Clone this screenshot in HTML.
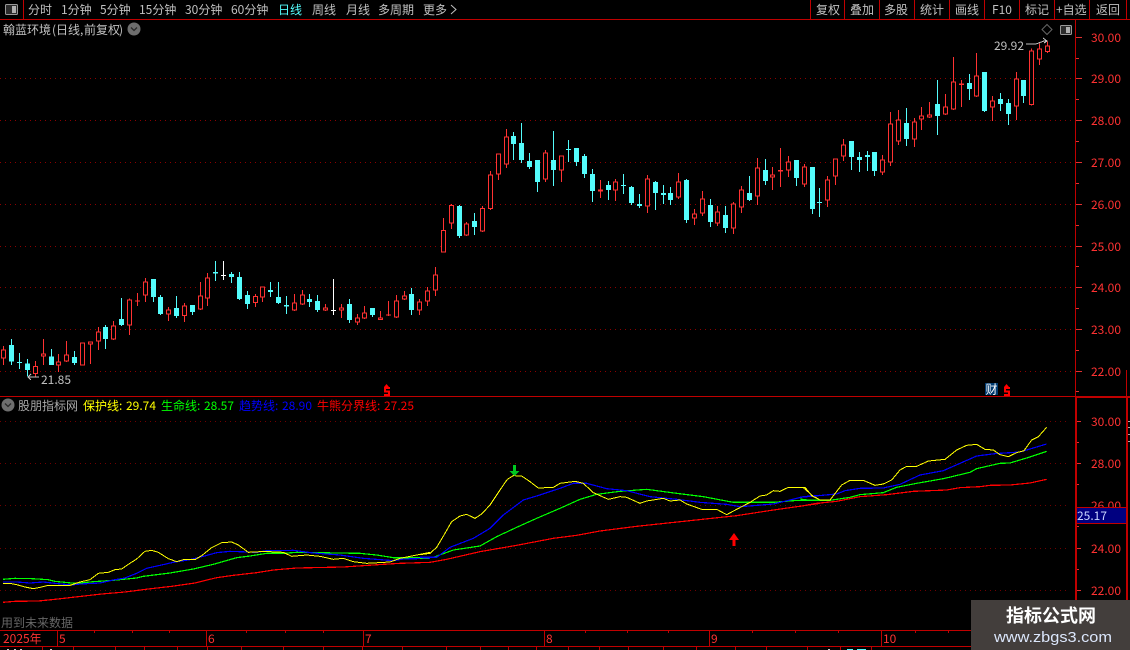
<!DOCTYPE html>
<html><head><meta charset="utf-8"><title>K</title>
<style>
html,body{margin:0;padding:0;background:#000;width:1130px;height:650px;overflow:hidden}
svg{display:block;position:absolute;left:0;top:0}
text{font-family:"WenQuanYi Zen Hei","Noto Sans CJK SC","Liberation Sans",sans-serif;font-size:12px;fill:#c0c0c0}
.n{fill:#ff3232}
.w{fill:none;stroke:#ff3232;stroke-width:3}
.c{fill:none;stroke:#54fcfc;stroke-width:3}
.v{fill:none;stroke:#fff;stroke-width:3}
.h{fill:#000;stroke:#ff3232;stroke-width:3}
.f{fill:#54fcfc}.r{fill:#ff3232}.x{fill:#fff}
.l{fill:none;stroke-width:3.6}
</style></head><body>
<svg width="1130" height="650" viewBox="0 0 1130 650" shape-rendering="crispEdges">
<rect width="1130" height="650" fill="#000"/>

<!-- grid -->
<path d="M0 78.5H1073M0 120.5H1073M0 162.5H1073M0 204.5H1073M0 246.5H1073M0 287.5H1073M0 329.5H1073M0 371.5H1073" stroke="#8c0000" stroke-dasharray="1 4" fill="none"/>
<path d="M0 421.5H1070M0 463.5H1070M0 505.5H1070M0 548.5H1070M0 590.5H1070" stroke="#700000" stroke-dasharray="1 4" fill="none"/>

<!-- frame -->
<g fill="#c00000">
<rect x="0" y="19" width="1130" height="1"/>
<rect x="23" y="0" width="1" height="19"/>
<rect x="810" y="0" width="1" height="19"/><rect x="844" y="0" width="1" height="19"/><rect x="879" y="0" width="1" height="19"/><rect x="914" y="0" width="1" height="19"/><rect x="949" y="0" width="1" height="19"/><rect x="984" y="0" width="1" height="19"/><rect x="1019" y="0" width="1" height="19"/><rect x="1054" y="0" width="1" height="19"/><rect x="1089" y="0" width="1" height="19"/><rect x="1126" y="0" width="1" height="19"/>
<rect x="1075" y="20" width="1" height="376"/>
<rect x="1126" y="370" width="1" height="26"/>
<rect x="0" y="396" width="1075" height="1"/>
<rect x="1075" y="396" width="55" height="2"/>
<rect x="1075" y="396" width="2" height="234"/>
<rect x="1126" y="396" width="2" height="234"/>
<rect x="0" y="630" width="1130" height="1"/>
<rect x="0" y="646" width="1130" height="1"/>
<rect x="57" y="630" width="1" height="16"/><rect x="206" y="630" width="1" height="16"/><rect x="363" y="630" width="1" height="16"/><rect x="544" y="630" width="1" height="16"/><rect x="709" y="630" width="1" height="16"/><rect x="881" y="630" width="1" height="16"/>
<path d="M94 631h1v2h-1zM132 631h1v2h-1zM169 631h1v2h-1zM246 631h1v2h-1zM285 631h1v2h-1zM323 631h1v2h-1zM585 631h1v2h-1zM627 631h1v2h-1zM668 631h1v2h-1zM752 631h1v2h-1zM795 631h1v2h-1zM838 631h1v2h-1zM915 631h1v2h-1zM948 631h1v2h-1z"/>
<path d="M42 647h1v3h-1zM73 647h1v3h-1zM115 647h1v3h-1zM144 647h1v3h-1zM177 647h1v3h-1zM207 647h1v3h-1zM241 647h1v3h-1zM283 647h1v3h-1zM323 647h1v3h-1zM362 647h1v3h-1zM402 647h1v3h-1zM446 647h1v3h-1zM480 647h1v3h-1zM508 647h1v3h-1zM536 647h1v3h-1zM568 647h1v3h-1zM599 647h1v3h-1zM628 647h1v3h-1zM663 647h1v3h-1zM696 647h1v3h-1zM735 647h1v3h-1zM766 647h1v3h-1zM807 647h1v3h-1zM840 647h1v3h-1zM871 647h1v3h-1z"/>
</g>
<g fill="#e03030">
<path d="M1076 37h6v1h-6zM1076 58h3v1h-3zM1076 78h6v1h-6zM1076 99h3v1h-3zM1076 120h6v1h-6zM1076 141h3v1h-3zM1076 162h6v1h-6zM1076 183h3v1h-3zM1076 204h6v1h-6zM1076 225h3v1h-3zM1076 246h6v1h-6zM1076 266h3v1h-3zM1076 287h6v1h-6zM1076 308h3v1h-3zM1076 329h6v1h-6zM1076 350h3v1h-3zM1076 371h6v1h-6zM1076 391h3v1h-3z"/>
<path d="M1077 421h4v1h-4zM1077 442h2v1h-2zM1077 463h4v1h-4zM1077 484h2v1h-2zM1077 526h2v1h-2zM1077 548h4v1h-4zM1077 569h2v1h-2zM1077 590h4v1h-4z"/>
</g>
<path d="M1128 421h2v1h-2zM1128 427h2v1h-2zM1128 434h2v1h-2zM1128 441h2v1h-2z" fill="#aaa"/>

<!-- candles A -->
<g transform="matrix(.33333 0 0 .33333 0 240)">
<path class="w" d="M10.5 318V375M106.5 363V412M130.5 297V375M175.5 342V396M199.5 303V366M247.5 307V377M271.5 304V372M295.5 261V330M340.5 243V300M388.5 175V285M412.5 159V198M436.5 114V186M505.5 201V243M553.5 189V246M601.5 126V210M622.5 99V198M766.5 162V201M787.5 139V186"/>
<path class="c" d="M34.5 297V375M58.5 339V387M82.5 357V410M154.5 327V375M223.5 333V375M316.5 255V327M364.5 174V258M460.5 117V186M481.5 165V225M529.5 168V234M577.5 195V225M646.5 63V123M694.5 96V129M718.5 96V180M742.5 153V207M811.5 126V171M835.5 126V192"/>
<path class="v" d="M670.5 63V120"/>
<path class="h" d="M4.5 329.5h12V354.5h-12zM100.5 379.5h12V400.5h-12zM124.5 341.5h12V348.5h-12zM169.5 365.5h12V374.5h-12zM193.5 344.5h12V363.5h-12zM241.5 308.5h12V375.5h-12zM265.5 305.5h12V312.5h-12zM289.5 275.5h12V302.5h-12zM334.5 257.5h12V297.5h-12zM382.5 179.5h12V255.5h-12zM430.5 125.5h12V165.5h-12zM499.5 209.5h12V222.5h-12zM547.5 197.5h12V226.5h-12zM595.5 167.5h12V207.5h-12zM616.5 113.5h12V174.5h-12zM760.5 169.5h12V187.5h-12zM781.5 140.5h12V170.5h-12z"/>
<path class="r" d="M405 181h15v3h-15z"/>
<path class="x" d="M663 105h15v3h-15z"/>
<path class="f" d="M27 315h15V365h-15zM51 366h15V369h-15zM75 370h15V390h-15zM147 349h15V375h-15zM216 351h15V369h-15zM309 261h15V297h-15zM357 237h15V255h-15zM453 117h15V171h-15zM474 171h15V222h-15zM522 204h15V228h-15zM570 195h15V216h-15zM639 96h15V101h-15zM687 102h15V111h-15zM711 111h15V177h-15zM735 165h15V192h-15zM804 150h15V156h-15zM828 171h15V189h-15z"/>
</g>
<!-- candles B -->
<g transform="matrix(.33333 0 0 .33333 280 240)">
<path class="w" d="M43.5 162V213M67.5 150V195M136.5 192V213M184.5 192V234M232.5 222V255M253.5 198V237M301.5 213V240M325.5 183V228M349.5 165V234M373.5 153V180M418.5 177V225M442.5 141V198M466.5 81V168"/>
<path class="c" d="M19.5 168V222M88.5 162V201M112.5 165V216M208.5 177V249M277.5 204V231M394.5 144V225"/>
<path class="v" d="M160.5 117V225"/>
<path class="h" d="M37.5 188.5h12V210.5h-12zM61.5 164.5h12V192.5h-12zM130.5 203.5h12V210.5h-12zM178.5 203.5h12V210.5h-12zM226.5 233.5h12V246.5h-12zM247.5 218.5h12V234.5h-12zM295.5 233.5h12V238.5h-12zM343.5 182.5h12V231.5h-12zM367.5 167.5h12V177.5h-12zM412.5 185.5h12V210.5h-12zM436.5 152.5h12V183.5h-12zM460.5 104.5h12V150.5h-12z"/>
<path class="r" d="M318 223h15v4h-15z"/>
<path class="x" d="M153 210h15v3h-15z"/>
<path class="f" d="M12 195h15V200h-15zM81 177h15V186h-15zM105 183h15V210h-15zM201 192h15V240h-15zM270 204h15V225h-15zM387 162h15V210h-15z"/>
</g>
<!-- candles C -->
<g transform="matrix(.33333 0 0 .33333 430 110)">
<path class="w" d="M40.5 324V428M64.5 282V357M109.5 336V378M157.5 288V366M181.5 183V300M205.5 130V210M229.5 57V174M346.5 120V216M394.5 136V216M511.5 210V264M556.5 207V273M652.5 195V309M745.5 189V267M793.5 297V345M817.5 243V318"/>
<path class="c" d="M88.5 285V384M133.5 309V375M250.5 66V150M274.5 39V159M298.5 129V177M322.5 150V246M370.5 63V228M415.5 90V156M439.5 114V168M463.5 132V204M487.5 177V276M535.5 213V270M580.5 192V252M604.5 228V285M628.5 252V294M676.5 213V300M700.5 225V282M721.5 231V285M769.5 207V339"/>
<path class="h" d="M34.5 361.5h12V426.5h-12zM58.5 286.5h12V339.5h-12zM103.5 341.5h12V375.5h-12zM151.5 295.5h12V363.5h-12zM175.5 194.5h12V295.5h-12zM199.5 131.5h12V192.5h-12zM223.5 80.5h12V162.5h-12zM340.5 128.5h12V207.5h-12zM388.5 137.5h12V180.5h-12zM505.5 239.5h12V243.5h-12zM550.5 215.5h12V240.5h-12zM646.5 206.5h12V288.5h-12zM739.5 215.5h12V261.5h-12zM787.5 311.5h12V324.5h-12zM811.5 266.5h12V309.5h-12z"/>
<path class="f" d="M81 288h15V378h-15zM126 333h15V351h-15zM243 78h15V102h-15zM267 99h15V150h-15zM291 153h15V171h-15zM315 150h15V216h-15zM363 150h15V180h-15zM408 117h15V120h-15zM432 114h15V156h-15zM456 138h15V192h-15zM480 192h15V243h-15zM528 225h15V240h-15zM573 225h15V228h-15zM597 231h15V279h-15zM621 282h15V288h-15zM669 216h15V249h-15zM693 249h15V255h-15zM714 249h15V270h-15zM762 210h15V330h-15z"/>
</g>
<!-- candles D -->
<g transform="matrix(.33333 0 0 .33333 700 100)">
<path class="w" d="M52.5 318V378M100.5 306V402M124.5 258V339M172.5 174V315M217.5 201V270M241.5 144V261M265.5 168V231M313.5 192V261M382.5 228V321M406.5 175V255M430.5 117V183M547.5 165V225M571.5 36V198M595.5 30V135M643.5 54V141M664.5 21V90M688.5 6V54"/>
<path class="c" d="M31.5 297V381M76.5 318V399M148.5 228V303M196.5 177V255M289.5 180V258M337.5 201V342M358.5 264V351M454.5 123V210M478.5 156V216M502.5 153V213M523.5 156V228M619.5 24V138"/>
<path class="h" d="M46.5 335.5h12V369.5h-12zM94.5 311.5h12V384.5h-12zM118.5 269.5h12V321.5h-12zM166.5 203.5h12V288.5h-12zM211.5 224.5h12V231.5h-12zM259.5 185.5h12V210.5h-12zM307.5 200.5h12V252.5h-12zM376.5 239.5h12V300.5h-12zM400.5 176.5h12V228.5h-12zM424.5 134.5h12V168.5h-12zM541.5 179.5h12V216.5h-12zM565.5 71.5h12V186.5h-12zM589.5 59.5h12V122.5h-12zM637.5 65.5h12V117.5h-12zM658.5 47.5h12V57.5h-12zM682.5 44.5h12V51.5h-12z"/>
<path class="r" d="M234 210h15v5h-15z"/>
<path class="f" d="M24 315h15V366h-15zM69 345h15V384h-15zM141 279h15V300h-15zM189 210h15V243h-15zM282 180h15V234h-15zM330 201h15V327h-15zM351 306h15V309h-15zM447 123h15V171h-15zM471 171h15V180h-15zM495 165h15V171h-15zM516 156h15V213h-15zM612 69h15V117h-15z"/>
</g>
<!-- candles E -->
<g transform="matrix(.33333 0 0 .33333 800 0)">
<path class="w" d="M436.5 282V345M460.5 171V330M484.5 240V321M529.5 159V291M577.5 288V363M649.5 216V360M694.5 146V316M718.5 130V195M742.5 124V159"/>
<path class="c" d="M412.5 240V405M508.5 222V300M553.5 216V336M601.5 279V333M625.5 297V375M670.5 240V309"/>
<path class="h" d="M430.5 320.5h12V342.5h-12zM454.5 245.5h12V327.5h-12zM523.5 227.5h12V288.5h-12zM571.5 302.5h12V321.5h-12zM643.5 236.5h12V318.5h-12zM688.5 152.5h12V313.5h-12zM712.5 146.5h12V176.5h-12zM736.5 137.5h12V154.5h-12z"/>
<path class="r" d="M477 250h15v5h-15z"/>
<path class="f" d="M405 312h15V348h-15zM501 249h15V267h-15zM546 216h15V333h-15zM594 297h15V312h-15zM618 309h15V342h-15zM663 240h15V288h-15z"/>
</g>

<!-- lower lines -->
<g transform="matrix(.33333 0 0 .33333 0 395)">
<polyline class="l" stroke="#f00" points="9,622 45,619 115,618 165,613 235,605 305,597 375,591 445,582 515,574 585,564 650,548 700,541 770,533 820,525 890,519 1030,516 1150,508 1200,505 1290,502"/>
<polyline class="l" stroke="#0f0" points="9,553 45,550 95,551 145,554 165,559 215,564 240,564 280,560 340,556 410,549 430,544 510,534 580,522 640,508 710,488 750,483 800,475 850,475 890,472 1080,475 1130,480 1180,488 1290,488"/>
<polyline class="l" stroke="#00f" points="9,561 50,561 90,564 130,561 165,565 215,570 240,567 300,564 340,555 375,549 410,535 440,520 480,511 520,502 570,494 610,484 650,473 690,469 770,472 800,467 880,466 940,474 1020,480 1090,490 1180,497 1210,492 1290,490"/>
<polyline class="l" stroke="#ff0" style="stroke-width:3" points="9,565 30,565 50,569 75,576 100,581 125,576 145,571 210,571 240,561 270,554 295,535 325,532 345,524 365,522 385,508 410,492 435,469 455,466 475,472 505,491 530,500 550,494 585,494 605,482 635,458 665,443 695,441 715,450 745,472 780,470 810,470 850,472 875,484 920,480 960,484 1000,493 1030,490 1060,500 1100,505 1170,501 1200,490 1290,472"/>
</g>
<g transform="matrix(.33333 0 0 .33333 420 440)">
<polyline class="l" stroke="#f00" points="30,367 80,358 180,335 290,316 400,295 470,286 540,273 650,259 800,243 950,227 1060,210 1200,190"/>
<polyline class="l" stroke="#0f0" points="0,355 40,352 100,330 180,318 230,290 290,262 350,235 420,205 480,178 530,163 600,154 680,148 770,160 850,170 940,187 1060,187 1120,182 1200,180"/>
<polyline class="l" stroke="#00f" points="0,352 50,352 90,322 160,295 210,265 250,225 310,180 350,168 420,145 460,130 500,130 560,146 620,152 690,170 770,178 840,187 920,193 960,200 1000,197 1060,192 1110,180 1150,170 1200,166"/>
<polyline class="l" stroke="#ff0" style="stroke-width:3" points="0,344 30,340 50,322 75,280 95,245 120,228 140,223 165,235 185,222 210,195 240,150 262,118 280,107 305,108 330,125 355,144 400,142 420,130 465,124 490,130 520,158 565,178 600,170 620,172 660,190 680,183 730,175 750,183 780,180 800,192 845,208 890,208 920,224 950,208 990,187 1020,168 1040,165 1060,152 1080,154 1105,142 1150,143 1175,165 1200,180"/>
</g>
<g transform="matrix(.33333 0 0 .33333 800 380)">
<polyline class="l" stroke="#f00" points="0,379 50,370 110,364 180,350 260,344 340,334 440,330 480,323 540,320 570,316 630,315 690,309 740,298"/>
<polyline class="l" stroke="#0f0" points="0,357 30,361 90,361 150,352 180,344 250,338 290,322 350,310 430,296 510,277 530,266 600,250 630,249 680,234 740,214"/>
<polyline class="l" stroke="#00f" points="0,352 110,342 135,332 180,325 250,324 300,313 360,285 430,272 530,228 585,221 660,216 740,192"/>
<polyline class="l" stroke="#ff0" style="stroke-width:3" points="0,322 15,322 35,347 60,360 90,360 125,315 150,301 190,301 225,316 250,312 275,300 300,270 320,259 350,259 385,243 435,238 470,210 500,196 530,193 555,208 580,210 600,224 625,230 650,218 672,212 695,180 715,170 740,142"/>
</g>

<!-- arrows -->
<path d="M513 465h3v6h3.500l-5 5-5-5h3.500z" fill="#00c820" shape-rendering="auto"/>
<path d="M734 533l5 7h-3.500v6h-3v-6h-3.500z" fill="#f00" shape-rendering="auto"/>

<!-- S markers -->
<path d="M386.500 384l2.500 3h-5zM1006.500 384l2.500 3h-5z" fill="#f00" shape-rendering="auto"/>
<path d="M390 388H385V391.500H389V395H384M1010 388H1005V391.500H1009V395H1004" stroke="#f00" stroke-width="1.800" fill="none"/>

<!-- 财 -->
<rect x="985" y="383" width="13" height="12" fill="#003a6e"/>
<text x="985.500" y="393.500" style="fill:#fff">财</text>

<!-- 21.85 arrow -->
<path d="M28 377H39M28 377l3-3M28 377l3 3" stroke="#c0c0c0" fill="none"/>
<!-- 29.92 arrow -->
<path d="M1026 44h10l8-3M1044 41h3M1043 38l4 3-3 2" stroke="#c0c0c0" fill="none"/>

<!-- icons -->
<g shape-rendering="auto">
<rect x="5.500" y="4.500" width="12" height="10" rx="1" fill="#2c2c2c" stroke="#999"/>
<rect x="12" y="6" width="4" height="7" fill="#b0b0b0"/>
<rect x="1060.500" y="25.500" width="11" height="9" rx="1" fill="#2c2c2c" stroke="#999"/>
<rect x="1066" y="27" width="4" height="6" fill="#b0b0b0"/>
<path d="M1047 24.500l5 5-5 5-5-5z" fill="none" stroke="#666"/>
<circle cx="134" cy="29" r="6.500" fill="#6e6e6e"/>
<path d="M131 27.500l3 3 3-3" fill="none" stroke="#2a2a2a" stroke-width="1.300"/>
<circle cx="8" cy="405" r="6.500" fill="#6e6e6e"/>
<path d="M5 403.500l3 3 3-3" fill="none" stroke="#2a2a2a" stroke-width="1.300"/>
<path d="M451 5l5 4.500-5 4.500" fill="none" stroke="#c0c0c0"/>
</g>

<!-- toolbar text -->
<text x="28" y="14">分时</text>
<text x="61" y="14">1分钟</text>
<text x="100" y="14">5分钟</text>
<text x="139" y="14">15分钟</text>
<text x="185" y="14">30分钟</text>
<text x="231" y="14">60分钟</text>
<text x="278" y="14" style="fill:#54fcfc">日线</text>
<text x="312" y="14">周线</text>
<text x="346" y="14">月线</text>
<text x="378" y="14">多周期</text>
<text x="423" y="14">更多</text>
<text x="816" y="14">复权</text>
<text x="850" y="14">叠加</text>
<text x="884" y="14">多股</text>
<text x="920" y="14">统计</text>
<text x="955" y="14">画线</text>
<text x="992" y="14">F10</text>
<text x="1025" y="14">标记</text>
<text x="1056" y="14">+自选</text>
<text x="1096" y="14">返回</text>

<!-- title -->
<text x="3" y="34">翰蓝环境</text>
<text x="52" y="34">(</text>
<text x="56" y="34">日线</text>
<text x="80" y="34">,</text>
<text x="84" y="34">前复权</text>
<text x="119" y="34">)</text>
<text x="994" y="50">29.92</text>
<text x="41" y="384">21.85</text>

<!-- axis labels -->
<text class="n" x="1091" y="42">30.00</text>
<text class="n" x="1091" y="83">29.00</text>
<text class="n" x="1091" y="125">28.00</text>
<text class="n" x="1091" y="167">27.00</text>
<text class="n" x="1091" y="209">26.00</text>
<text class="n" x="1091" y="251">25.00</text>
<text class="n" x="1091" y="292">24.00</text>
<text class="n" x="1091" y="334">23.00</text>
<text class="n" x="1091" y="376">22.00</text>
<text class="n" x="1091" y="426">30.00</text>
<text class="n" x="1091" y="468">28.00</text>
<text class="n" x="1091" y="510">26.00</text>
<text class="n" x="1091" y="553">24.00</text>
<text class="n" x="1091" y="595">22.00</text>

<!-- value box -->
<rect x="1077" y="507" width="49" height="17" fill="#000080"/>
<path d="M1077 507h49v1h-49zM1077 523h49v1h-49z" fill="#c00000"/>
<text x="1077" y="520" style="fill:#c8d4ff">25.17</text>

<!-- indicator header -->
<text x="18" y="410" style="fill:#a8a8a8">股朋指标网</text>
<text x="83" y="410" style="fill:#ff0">保护线:</text><text x="126" y="410" style="fill:#ff0">29.74</text>
<text x="161" y="410" style="fill:#0f0">生命线:</text><text x="204" y="410" style="fill:#0f0">28.57</text>
<text x="239" y="410" style="fill:#0000ff">趋势线:</text><text x="282" y="410" style="fill:#0000ff">28.90</text>
<text x="317" y="410" style="fill:#f00">牛熊分界线:</text><text x="384" y="410" style="fill:#f00">27.25</text>

<!-- bottom -->
<text x="1" y="627" style="fill:#666">用到未来数据</text>
<text class="n" x="3" y="643">2025年</text>
<text class="n" x="59" y="643">5</text>
<text class="n" x="208" y="643">6</text>
<text class="n" x="365" y="643">7</text>
<text class="n" x="546" y="643">8</text>
<text class="n" x="711" y="643">9</text>
<text class="n" x="883" y="643">10</text>
<path d="M7 649h2v1h-2zM14 649h2v1h-2zM20 649h2v1h-2zM50 649h2v1h-2zM828 649h2v1h-2z" fill="#ccc"/>
<path d="M847 649h6v1h-6zM857 649h9v1h-9z" fill="#54fcfc"/>

<!-- watermark -->
<rect x="971" y="600" width="159" height="50" fill="#433e3c"/>
<text x="1006" y="622" style="font-size:18px;font-weight:bold;fill:#fff">指标公式网</text>
<text x="994" y="642" textLength="118" lengthAdjust="spacingAndGlyphs" style="font-family:'Liberation Sans',sans-serif;font-size:15px;fill:#dbe6fb">www.zbgs3.com</text>
</svg>
</body></html>
